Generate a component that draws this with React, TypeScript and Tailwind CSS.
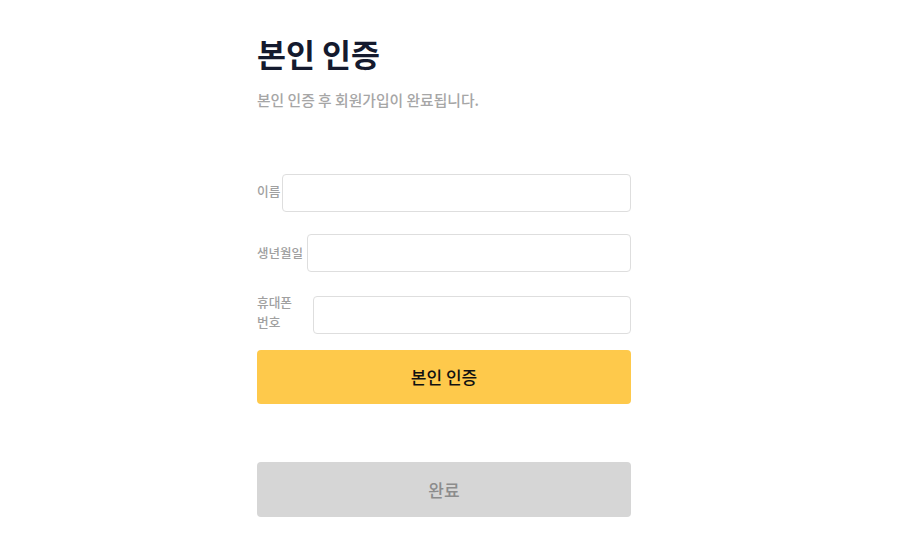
import React from "react";

const font = { fontFamily: '"Noto Sans CJK KR", "Noto Sans", sans-serif' };

export default function App() {
  return (
    <div className="min-h-[558px] w-full bg-white flex justify-center pr-[26px]" style={font}>
      <div className="w-[374px] flex flex-col pt-[33px]">
        <h1 className="text-[31.5px] leading-[40px] font-bold text-[#141a2e]">본인 인증</h1>
        <p className="mt-[17px] text-[14.8px] leading-[20px] font-medium text-[#a6a6a6]">
          본인 인증 후 회원가입이 완료됩니다.
        </p>
        <div className="mt-[64px] flex flex-col">
          <div className="flex items-center">
            <label className="w-[25px] shrink-0 whitespace-nowrap mb-[4px] text-[12.7px] leading-[20px] font-medium text-[#a0a0a0]">이름</label>
            <input className="flex-1 h-[38px] border border-[#dedede] rounded-[4px] outline-none px-3" />
          </div>
          <div className="mt-[22px] flex items-center">
            <label className="w-[50px] shrink-0 whitespace-nowrap text-[12.5px] leading-[20px] font-medium text-[#a0a0a0]">생년월일</label>
            <input className="flex-1 h-[38px] border border-[#dedede] rounded-[4px] outline-none px-3" />
          </div>
          <div className="mt-[20px] flex items-center">
            <label className="w-[56px] shrink-0 mb-[6px] text-[12.7px] leading-[20px] font-medium text-[#a0a0a0]">
              휴대폰
              <br />
              번호
            </label>
            <input className="flex-1 h-[38px] border border-[#dedede] rounded-[4px] outline-none px-3" />
          </div>
        </div>
        <button className="mt-[12px] h-[54px] w-full rounded-[4px] bg-[#fec94b] text-[17px] font-medium text-[#111111]">
          본인 인증
        </button>
        <button className="mt-[58px] h-[55px] w-full rounded-[4px] bg-[#d6d6d6] text-[17px] font-medium text-[#8c8c8c]">
          완료
        </button>
      </div>
    </div>
  );
}
